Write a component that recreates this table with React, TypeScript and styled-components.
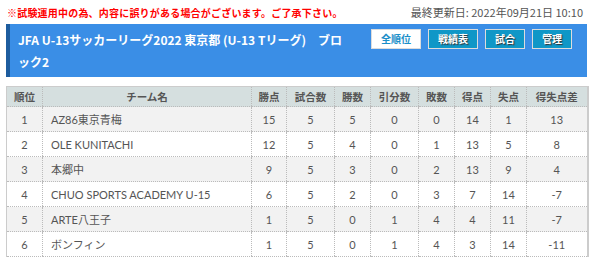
import React from 'react';
import styled, { createGlobalStyle } from 'styled-components';

const GlobalStyle = createGlobalStyle`
  body {
    margin: 0;
    padding: 0 6px;
    background: #fff;
    font-family: "Noto Sans CJK JP", "Noto Sans", sans-serif;
  }
`;

const TopLine = styled.div`
  display: flex;
  justify-content: space-between;
  align-items: center;
  height: 24px;
  padding-right: 4px;
`;

const Notice = styled.span`
  color: #f00;
  font-size: 10px;
  font-weight: bold;
  letter-spacing: 0.2px;
  padding-left: 1px;
`;

const Updated = styled.span`
  color: #555;
  font-size: 11px;
  font-family: "Noto Sans CJK JP", sans-serif;
`;

const TitleBar = styled.div`
  display: flex;
  align-items: flex-start;
  background: #3a8ee6;
  border-left: 4px solid #1d5c9e;
  padding: 5px 15px 4px 8px;
  height: 44px;
`;

const Title = styled.h1`
  flex: 1;
  margin: 0;
  color: #fff;
  font-size: 12px;
  font-weight: bold;
  line-height: 22px;
  padding-right: 18px;
`;

const ButtonRow = styled.div`
  display: flex;
  gap: 7px;
`;

const NavButton = styled.button<{ $active?: boolean }>`
  height: 20px;
  padding: 0 9px;
  border: 1px solid #dcdcdc;
  background: ${(p) => (p.$active ? '#fff' : '#0f97c7')};
  color: ${(p) => (p.$active ? '#1a8fc9' : '#fff')};
  text-shadow: ${(p) => (p.$active ? 'none' : '1px 1px 1px #333')};
  font-family: "Noto Sans CJK JP", sans-serif;
  font-size: 10px;
  font-weight: bold;
  line-height: 18px;
  cursor: pointer;
`;

const Table = styled.table`
  margin-top: 9px;
  width: 581px;
  table-layout: fixed;
  border-collapse: collapse;
  border-top: 1px solid #ccc;
  border-left: 1px solid #ccc;
  border-right: 2px solid #ccc;
  font-family: Lato, "Noto Sans CJK JP", sans-serif;
  font-size: 11px;
  color: #555;
`;

const Head = styled.th`
  height: 19px;
  padding: 0;
  background: #d5dfdf;
  font-family: "Noto Sans CJK JP", sans-serif;
  font-size: 10.5px;
  font-weight: bold;
  color: #555;
  border-left: 1px dotted #bbb;
  border-bottom: 1px dotted #bbb;
`;

const Row = styled.tr<{ $odd: boolean }>`
  background: ${(p) => (p.$odd ? '#f2f2f2' : '#fff')};
`;

const Cell = styled.td<{ $left?: boolean }>`
  height: 24px;
  padding: 0 0 0 ${(p) => (p.$left ? '8px' : '0')};
  text-align: ${(p) => (p.$left ? 'left' : 'center')};
  border-left: 1px dotted #bbb;
  border-bottom: 1px dotted #bbb;
  white-space: nowrap;
`;

const widths = [36, 209, 35, 48, 36, 48, 36, 36, 36, 61];
const headers = ['順位', 'チーム名', '勝点', '試合数', '勝数', '引分数', '敗数', '得点', '失点', '得失点差'];

const rows: (string | number)[][] = [
  [1, 'AZ86東京青梅', 15, 5, 5, 0, 0, 14, 1, 13],
  [2, 'OLE KUNITACHI', 12, 5, 4, 0, 1, 13, 5, 8],
  [3, '本郷中', 9, 5, 3, 0, 2, 13, 9, 4],
  [4, 'CHUO SPORTS ACADEMY U-15', 6, 5, 2, 0, 3, 7, 14, -7],
  [5, 'ARTE八王子', 1, 5, 0, 1, 4, 4, 11, -7],
  [6, 'ボンフィン', 1, 5, 0, 1, 4, 3, 14, -11],
];

const App = () => {
  return (
    <>
      <GlobalStyle />
      <TopLine>
        <Notice>※試験運用中の為、内容に誤りがある場合がございます。ご了承下さい。</Notice>
        <Updated>最終更新日: 2022年09月21日 10:10</Updated>
      </TopLine>
      <TitleBar>
        <Title>JFA U-13サッカーリーグ2022 東京都 (U-13 Tリーグ)　ブロック2</Title>
        <ButtonRow>
          <NavButton $active>全順位</NavButton>
          <NavButton>戦績表</NavButton>
          <NavButton>試合</NavButton>
          <NavButton>管理</NavButton>
        </ButtonRow>
      </TitleBar>
      <Table>
        <colgroup>
          {widths.map((w, i) => (
            <col key={i} style={{ width: w }} />
          ))}
        </colgroup>
        <thead>
          <tr>
            {headers.map((h) => (
              <Head key={h}>{h}</Head>
            ))}
          </tr>
        </thead>
        <tbody>
          {rows.map((r, i) => (
            <Row key={i} $odd={i % 2 === 0}>
              {r.map((v, j) => (
                <Cell key={j} $left={j === 1}>
                  {v}
                </Cell>
              ))}
            </Row>
          ))}
        </tbody>
      </Table>
    </>
  );
};

export default App;
